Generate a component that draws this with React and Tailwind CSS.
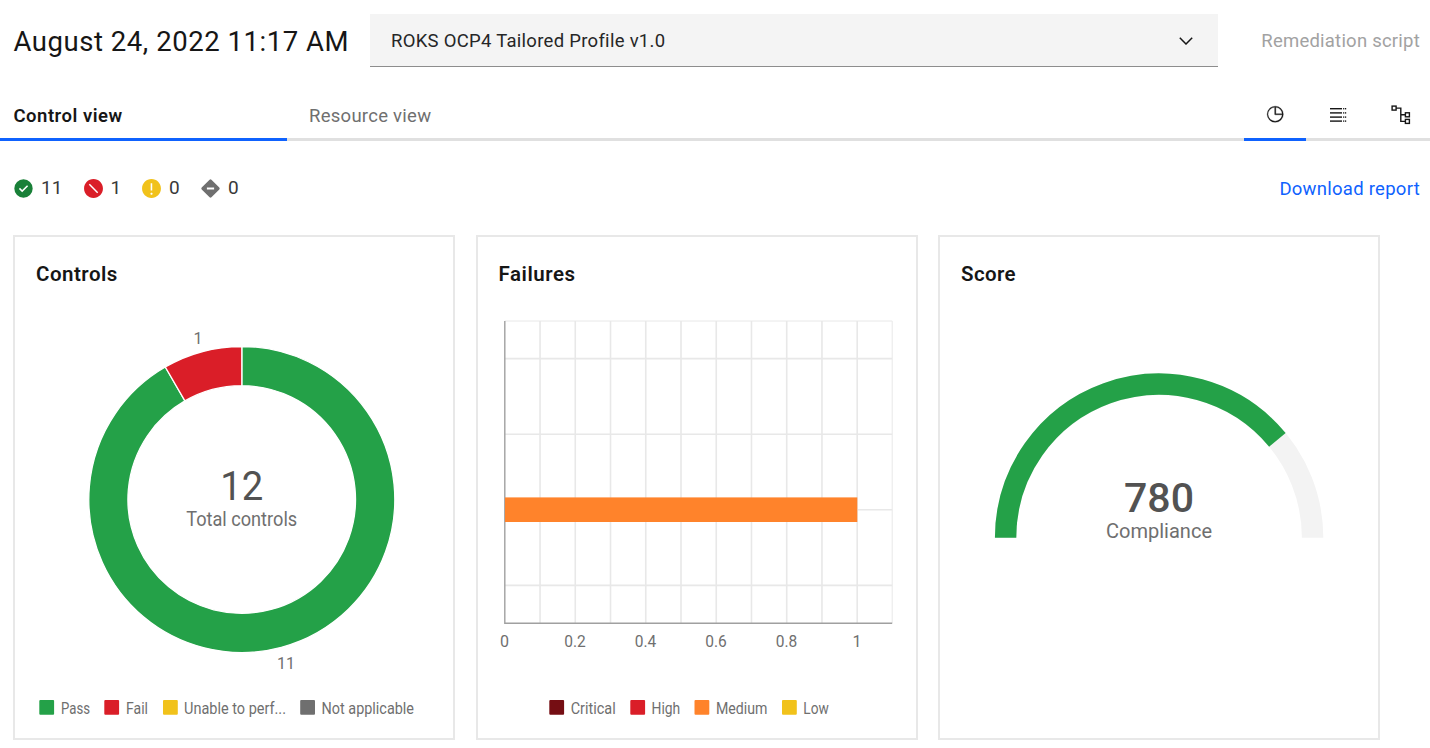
const FONT = "font-['Roboto','Noto_Sans',sans-serif]";

function T({ x, y, w, size, fill = "#6f6f6f", weight = 400, anchor = "start", children }) {
  return (
    <text x={x} y={y} fontSize={size} fill={fill} fontWeight={weight} textAnchor={anchor} textLength={w} lengthAdjust="spacingAndGlyphs">
      {children}
    </text>
  );
}

function CheckIcon() {
  return (
    <svg width="21" height="21" viewBox="0 0 32 32" fill="#198038">
      <path d="M16,2A14,14,0,1,0,30,16,14,14,0,0,0,16,2ZM14,21.5908l-5-5L10.5906,15,14,18.4092,21.41,11l1.5957,1.5859Z" />
    </svg>
  );
}
function ErrorIcon() {
  return (
    <svg width="21" height="21" viewBox="0 0 20 20" fill="#da1e28">
      <path d="M10 1c-5 0-9 4-9 9s4 9 9 9 9-4 9-9-4-9-9-9zm3.5 13.5l-8-8 1-1 8 8-1 1z" />
    </svg>
  );
}
function WarnIcon() {
  return (
    <svg width="21" height="21" viewBox="0 0 20 20" fill="#f1c21b">
      <path d="M10 1c-5 0-9 4-9 9s4 9 9 9 9-4 9-9-4-9-9-9zM9.2 5h1.5v7H9.2V5zm.8 11c-.6 0-1-.4-1-1s.4-1 1-1 1 .4 1 1-.4 1-1 1z" />
    </svg>
  );
}
function DiamondIcon() {
  return (
    <svg width="21" height="21" viewBox="0 0 32 32" fill="#6f6f6f">
      <path d="M29.4 14.6 17.4 2.6a2 2 0 0 0-2.8 0L2.6 14.6a2 2 0 0 0 0 2.8l12 12a2 2 0 0 0 2.8 0l12-12a2 2 0 0 0 0-2.8zM21.5 17.6h-11v-3.2h11z" />
    </svg>
  );
}
function PieIcon() {
  return (
    <svg width="18.5" height="18.5" viewBox="0 0 32 32" fill="#161616" stroke="#161616" strokeWidth=".5">
      <path d="M16,2A14,14,0,1,0,30,16,14,14,0,0,0,16,2ZM28,15H17V4A12,12,0,0,1,28,15ZM16,28A12,12,0,0,1,15,4V16a1,1,0,0,0,1,1H28A12,12,0,0,1,16,28Z" />
    </svg>
  );
}
function ListIcon() {
  return (
    <svg width="18" height="16" viewBox="0 0 18 16" fill="#161616">
      {[1, 5.2, 9.4, 13.4].map((y) => (
        <g key={y}>
          <rect x="1" y={y} width="12" height="1.4" />
          <rect x="14.1" y={y} width="1.2" height="1.4" />
          <rect x="16" y={y} width="1.2" height="1.4" />
        </g>
      ))}
    </svg>
  );
}
function TreeIcon() {
  return (
    <svg width="20" height="20" viewBox="0 0 20 20" fill="none" stroke="#161616" strokeWidth="1.4">
      <rect x="1.1" y="1.1" width="4" height="4" />
      <rect x="14.4" y="7.8" width="4" height="4" />
      <rect x="14.4" y="14.4" width="4" height="4" />
      <path d="M5.1 3.1H9.8V16.4H14.4M9.8 9.8H14.4" />
    </svg>
  );
}

const tallies = [
  { Icon: CheckIcon, value: "11", cls: "w-[69.5px]" },
  { Icon: ErrorIcon, value: "1", cls: "w-[58.5px]" },
  { Icon: WarnIcon, value: "0", cls: "w-[59px]" },
  { Icon: DiamondIcon, value: "0", cls: "w-[59px]" },
];

function Card({ title, spacing, children }) {
  return (
    <section className="flex h-[505px] w-[442px] flex-none flex-col border-2 border-[#e8e8e8]">
      <h2 className={`pl-[21px] pt-[22px] text-[20.5px] leading-[30px] font-semibold text-[#161616] ${spacing}`}>{title}</h2>
      {children}
    </section>
  );
}

function Legend({ items, y = 707.3 }) {
  return items.map(([label, color, bx, tx, w]) => (
    <g key={label}>
      <rect x={bx} y={y - 7.3} width="14.8" height="14.8" rx="1" fill={color} />
      <T x={tx} y={y + 6.2} w={w} size={16.2}>{label}</T>
    </g>
  ));
}

function Donut() {
  return (
    <svg className="flex-none" width="438" height="449" viewBox="15 289 438 449">
      <g stroke="#fff" strokeWidth="1.3">
        <path fill="#24a148" d="M241.8 346.5A153 153 0 1 1 165.3 367L184.9 400.9A113.8 113.8 0 1 0 241.8 385.7Z" />
        <path fill="#da1e28" d="M165.3 367A153 153 0 0 1 241.8 346.5V385.7A113.8 113.8 0 0 0 184.9 400.9Z" />
      </g>
      <T x={198} y={344} size={16} anchor="middle">1</T>
      <T x={286} y={668.5} size={16} anchor="middle">11</T>
      <T x={241.7} y={500} w={43} size={40} anchor="middle" fill="#525252">12</T>
      <T x={241.7} y={526} w={111} size={20} anchor="middle">Total controls</T>
      <Legend
        items={[
          ["Pass", "#24a148", 39.3, 61, 29],
          ["Fail", "#da1e28", 104.3, 126, 22],
          ["Unable to perf...", "#f1c21b", 163, 184, 102],
          ["Not applicable", "#6f6f6f", 300.2, 321.5, 92.5],
        ]}
      />
    </svg>
  );
}

function Bars() {
  const step = 35.24;
  const ticks = ["0", "0.2", "0.4", "0.6", "0.8", "1"];
  return (
    <svg className="flex-none" width="438" height="449" viewBox="478 289 438 449">
      <g stroke="#e8e8e8" strokeWidth="1.6" fill="none">
        <path strokeWidth="1" d="M504.8 321H892.2V623" />
        {[1, 2, 3, 4, 5, 6, 7, 8, 9, 10].map((i) => (
          <path key={i} d={`M${504.8 + i * step} 321V623`} />
        ))}
        {[358.6, 434.2, 509.7, 585.4].map((y) => (
          <path key={y} d={`M504.8 ${y}H892.2`} />
        ))}
      </g>
      <path d="M504.8 321V623.2H892.2" stroke="#a0a0a0" strokeWidth="1.4" fill="none" />
      <rect x="505" y="497.4" width="352.3" height="24.6" fill="#ff832b" />
      {ticks.map((t, i) => (
        <T key={t} x={504.6 + i * 2 * step} y={646.5} size={16} w={t.length > 1 ? 21.5 : undefined} anchor="middle">{t}</T>
      ))}
      <Legend
        items={[
          ["Critical", "#750e13", 549.3, 570.7, 45],
          ["High", "#da1e28", 630.3, 651.5, 28.7],
          ["Medium", "#ff832b", 694.5, 716, 51.5],
          ["Low", "#f1c21b", 782, 803.3, 25.5],
        ]}
      />
    </svg>
  );
}

function Gauge() {
  return (
    <svg className="flex-none" width="438" height="449" viewBox="940 289 438 449">
      <path d="M1005.6 537.7A153.5 153.5 0 0 1 1312.6 537.7" fill="none" stroke="#f3f3f3" strokeWidth="21.4" />
      <path d="M1005.6 537.7A153.5 153.5 0 0 1 1277.4 439.9" fill="none" stroke="#24a148" strokeWidth="21.4" />
      <T x={1159} y={512} w={70} size={40.5} weight={500} anchor="middle" fill="#525252">780</T>
      <T x={1159} y={538} w={106} size={20} anchor="middle">Compliance</T>
    </svg>
  );
}

export default function App() {
  return (
    <div className={`h-[748px] w-[1430px] overflow-hidden bg-white ${FONT}`}>
      <header className="flex h-[67px] pt-[14px]">
        <h1 className="w-[370px] whitespace-nowrap pl-[13.5px] text-[27.5px] leading-[56px] tracking-[0.54px] text-[#161616]">August 24, 2022 11:17 AM</h1>
        <div className="flex h-[53px] w-[848px] items-center justify-between border-b border-[#8d8d8d] bg-[#f4f4f4] pl-[21px] pr-[25px] text-[18.5px] tracking-[0.28px] text-[#262626]">
          <span className="pt-[3px]">ROKS OCP4 Tailored Profile v1.0</span>
          <svg className="mt-[2px]" width="14" height="8" viewBox="0 0 14 8" fill="none" stroke="#161616" strokeWidth="1.5"><path d="M.8.8 7 7 13.2.8" /></svg>
        </div>
        <div className="flex-1 pr-[10px] text-right text-[18.5px] leading-[55px] tracking-[0.23px] text-[#a2a2a2]">Remediation script</div>
      </header>

      <nav className="mt-[21px] flex h-[53px] text-[18.5px] leading-[56px]">
        <div className="w-[287px] border-b-[3px] border-[#0f62fe] pl-[13.5px] font-semibold tracking-[0.5px] text-[#161616]">Control view</div>
        <div className="flex-1 border-b-[3px] border-[#e0e0e0] pl-[22px] tracking-[0.27px] text-[#6f6f6f]">Resource view</div>
        <div className="flex w-[62px] items-center justify-center border-b-[3px] border-[#0f62fe] pt-[2px]"><PieIcon /></div>
        <div className="flex w-[63px] items-center justify-center border-b-[3px] border-[#e0e0e0] pt-[3px]"><ListIcon /></div>
        <div className="flex w-[61px] items-center border-b-[3px] border-[#e0e0e0] pt-[3px] pl-[22px]"><TreeIcon /></div>
      </nav>

      <div className="flex h-[94px] items-center justify-between pl-[13px] pr-[10px] text-[19px]">
        <div className="flex">
          {tallies.map(({ Icon, value, cls }, i) => (
            <div key={i} className={`flex items-center gap-[7px] text-[#393939] ${cls}`}><Icon /><span>{value}</span></div>
          ))}
        </div>
        <a className="pt-[3px] text-[18.5px] tracking-[0.27px] text-[#0f62fe]">Download report</a>
      </div>

      <main className="flex gap-[20.5px] pl-[13px]">
        <Card title="Controls" spacing="tracking-[0.5px]"><Donut /></Card>
        <Card title="Failures" spacing="tracking-[0.55px]"><Bars /></Card>
        <Card title="Score" spacing="tracking-[0.4px]"><Gauge /></Card>
      </main>
    </div>
  );
}
